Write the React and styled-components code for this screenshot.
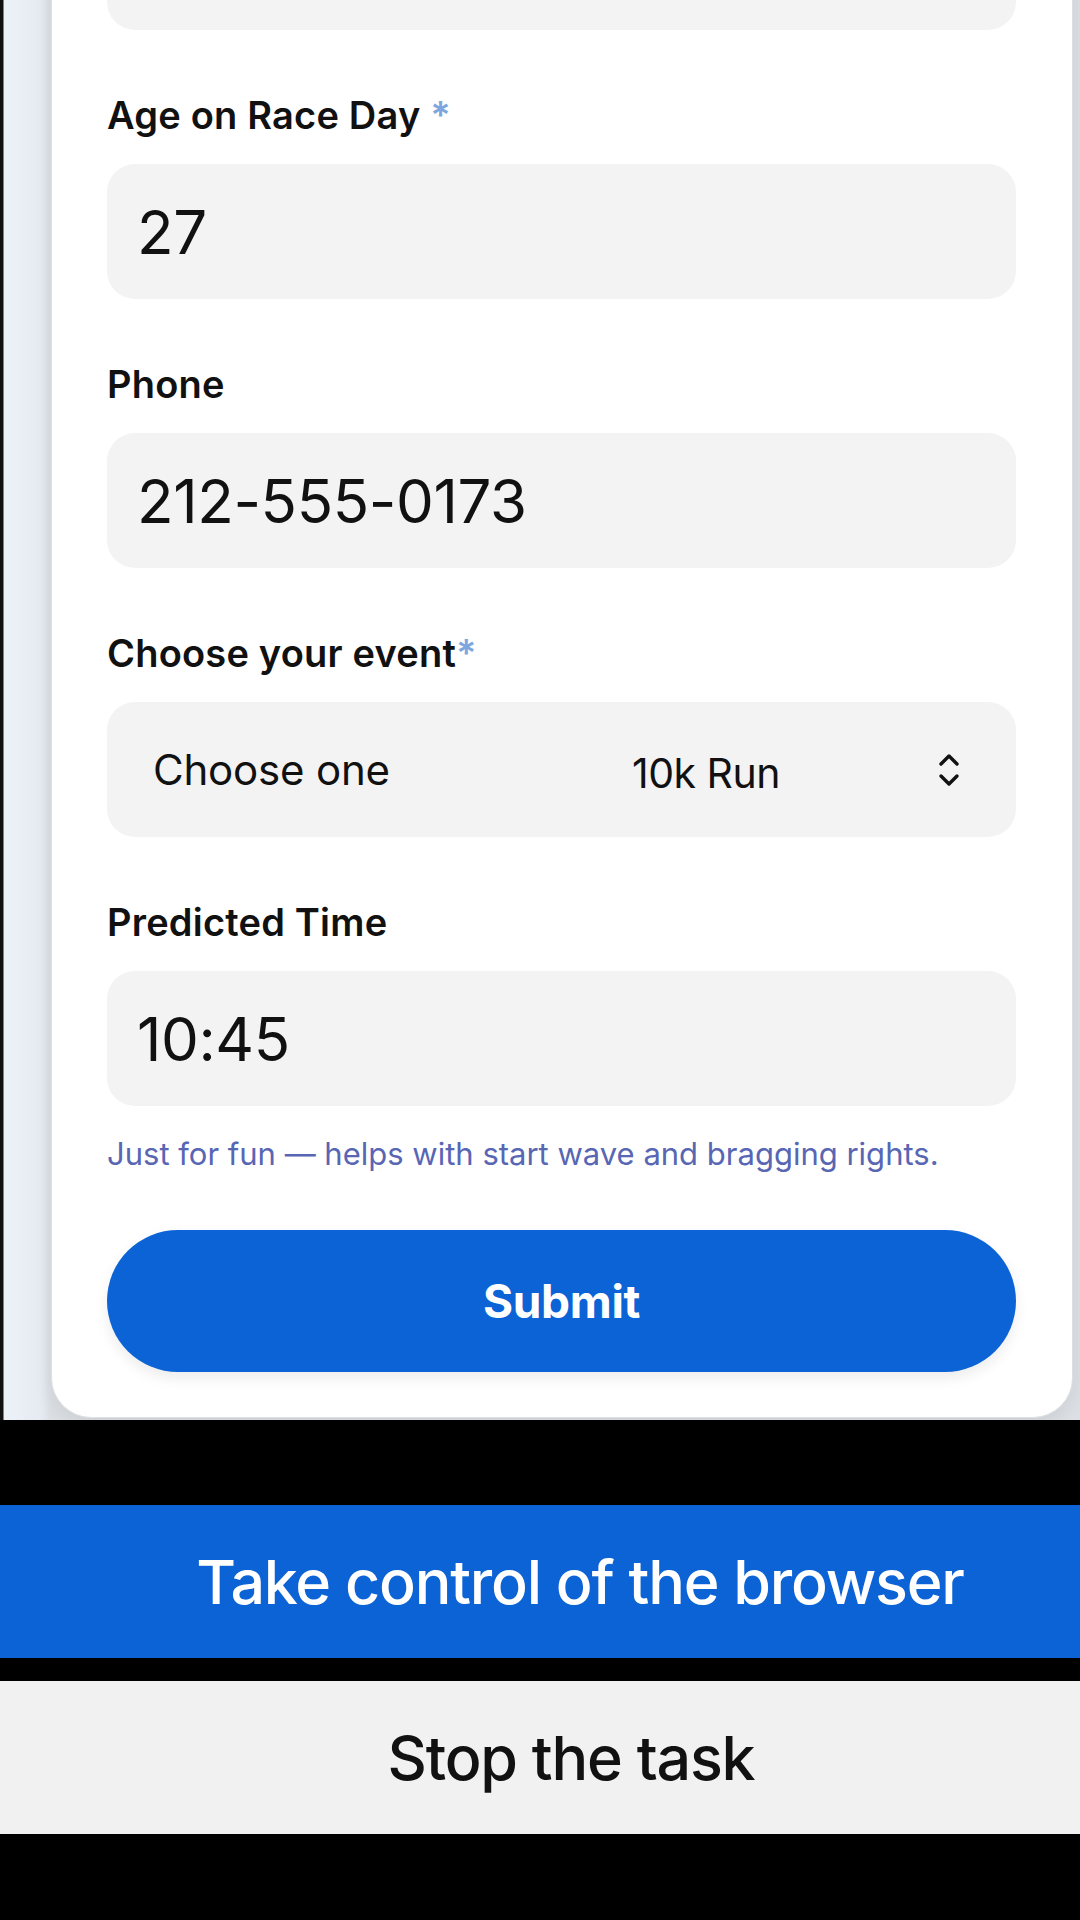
import styled, { createGlobalStyle } from 'styled-components'

const GlobalStyle = createGlobalStyle`
  html, body {
    margin: 0;
    padding: 0;
    background: #000;
  }
  body {
    width: 1080px;
    height: 1920px;
    overflow: hidden;
    font-family: Inter, "Liberation Sans", sans-serif;
  }
`

const fields = [
  { label: 'Age on Race Day', required: ' *', value: '27' },
  { label: 'Phone', value: '212-555-0173' },
]

function ChevronUpDown() {
  return (
    <svg width="24" height="36" viewBox="0 0 24 36" fill="none" stroke="#111" strokeWidth="3.4" strokeLinecap="round" strokeLinejoin="round">
      <path d="M4 12 L12 4 L20 12" />
      <path d="M4 24 L12 32 L20 24" />
    </svg>
  )
}

export default function App() {
  return (
    <>
      <GlobalStyle />
      <Page>
        <Screen>
          <Card>
            <Field>
              <Input readOnly defaultValue="" />
            </Field>

            {fields.map((f) => (
              <Field key={f.label}>
                <Label>
                  {f.label}
                  {f.required && <Star>{f.required}</Star>}
                </Label>
                <Input readOnly defaultValue={f.value} />
              </Field>
            ))}

            <Field>
              <Label>
                Choose your event<Star>*</Star>
              </Label>
              <Select>
                <Placeholder>Choose one</Placeholder>
                <SelectValue>10k Run</SelectValue>
                <ChevronUpDown />
              </Select>
            </Field>

            <Field>
              <Label>Predicted Time</Label>
              <Input readOnly defaultValue="10:45" />
              <Help>Just for fun — helps with start wave and bragging rights.</Help>
            </Field>

            <Submit type="button">Submit</Submit>
          </Card>
        </Screen>

        <Controls>
          <BarButton primary shift={80}>Take control of the browser</BarButton>
          <BarButton shift={62}>Stop the task</BarButton>
        </Controls>
      </Page>
    </>
  )
}

const Page = styled.div`
  width: 1080px;
  height: 1920px;
  display: flex;
  flex-direction: column;
  background: #000;
`

const Screen = styled.div`
  height: 1420px;
  flex-shrink: 0;
  overflow: hidden;
  display: flex;
  flex-direction: column;
  justify-content: flex-end;
  padding: 0 7px 2px 51px;
  box-sizing: border-box;
  background: linear-gradient(90deg, #111 0, #111 3px, #edf1f8 4px, #e6ebf3 40px, #dcdfe4 51px);
`

const Card = styled.div`
  flex-shrink: 0;
  background: #fff;
  border-radius: 0 0 40px 40px;
  border: 1px solid #dedfe2;
  border-top: none;
  box-shadow: 0 6px 18px rgba(0, 0, 0, 0.08);
  padding: 0 56px 45px 55px;
  display: flex;
  flex-direction: column;
  gap: 65px;
`

const Field = styled.div`
  display: flex;
  flex-direction: column;
  gap: 29px;
`

const Label = styled.label`
  font-size: 38px;
  line-height: 40px;
  font-weight: 600;
  color: #111;
  letter-spacing: 0.2px;
`

const Star = styled.span`
  color: #7ea6de;
`

const Input = styled.input`
  box-sizing: border-box;
  height: 135px;
  width: 100%;
  border: none;
  outline: none;
  border-radius: 28px;
  background: #f3f3f3;
  padding: 0 30px;
  font-family: inherit;
  font-size: 60px;
  color: #111;
  letter-spacing: -0.4px;
`

const Select = styled.div`
  height: 135px;
  border-radius: 28px;
  background: #f3f3f3;
  display: grid;
  grid-template-columns: 479px 1fr auto;
  align-items: center;
  padding: 0 55px 0 46px;
  color: #111;
`

const Placeholder = styled.span`
  font-size: 42px;
  letter-spacing: -0.2px;
`

const SelectValue = styled.span`
  font-size: 41px;
  letter-spacing: -0.5px;
  padding-top: 6px;
`

const Help = styled.p`
  margin: 2px 0 -6px;
  font-size: 31px;
  line-height: 34px;
  color: #5866b4;
  letter-spacing: 0;
`

const Submit = styled.button`
  height: 142px;
  border: none;
  border-radius: 71px;
  background: #0b63d6;
  color: #fff;
  font-family: inherit;
  font-size: 46px;
  font-weight: 700;
  letter-spacing: -0.3px;
  box-shadow: 0 6px 14px rgba(0, 0, 0, 0.08);
`

const Controls = styled.div`
  flex: 1;
  display: flex;
  flex-direction: column;
  padding-top: 85px;
  gap: 23px;
`

const BarButton = styled.div`
  height: 153px;
  display: flex;
  align-items: center;
  justify-content: center;
  padding-left: ${(p) => p.shift}px;
  background: ${(p) => (p.primary ? '#0b63d6' : '#f1f1f1')};
  color: ${(p) => (p.primary ? '#fff' : '#111')};
  font-size: 61px;
  font-weight: 500;
  letter-spacing: -1.2px;
`
